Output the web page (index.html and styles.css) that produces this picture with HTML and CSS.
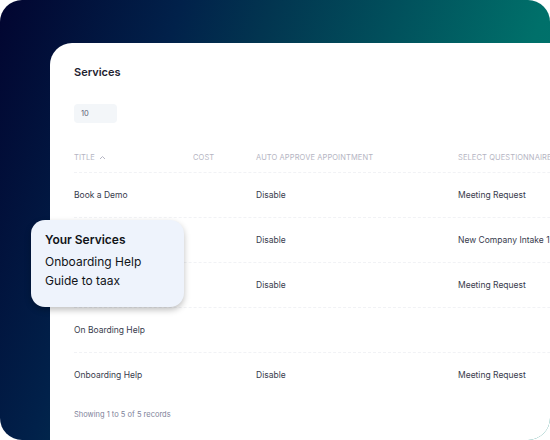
FILE: index.html
```html
<!DOCTYPE html>
<html lang="en">
<head>
    <meta charset="UTF-8">
    <meta name="viewport" content="width=device-width, initial-scale=1.0">
    <title>Services</title>
    <link rel="stylesheet" href="styles.css">
</head>
<body>

    <div class="frame">
        <div class="panel">
            <h1 class="panel-title">Services</h1>
            <div class="page-size">10</div>

            <div class="table">
                <div class="row head">
                    <div class="cell">Title
                        <svg class="sort" width="7" height="5" viewBox="0 0 7 5"><path d="M1 4 L3.5 1.5 L6 4" fill="none" stroke="currentColor" stroke-width="1"/></svg>
                    </div>
                    <div class="cell">Cost</div>
                    <div class="cell">Auto Approve Appointment</div>
                    <div class="cell">Select Questionnaire</div>
                </div>
                <div class="row">
                    <div class="cell">Book a Demo</div>
                    <div class="cell"></div>
                    <div class="cell">Disable</div>
                    <div class="cell">Meeting Request</div>
                </div>
                <div class="row">
                    <div class="cell"></div>
                    <div class="cell"></div>
                    <div class="cell">Disable</div>
                    <div class="cell">New Company Intake 1</div>
                </div>
                <div class="row">
                    <div class="cell"></div>
                    <div class="cell"></div>
                    <div class="cell">Disable</div>
                    <div class="cell">Meeting Request</div>
                </div>
                <div class="row">
                    <div class="cell">On Boarding Help</div>
                    <div class="cell"></div>
                    <div class="cell"></div>
                    <div class="cell"></div>
                </div>
                <div class="row last">
                    <div class="cell">Onboarding Help</div>
                    <div class="cell"></div>
                    <div class="cell">Disable</div>
                    <div class="cell">Meeting Request</div>
                </div>
            </div>

            <p class="records">Showing 1 to 5 of 5 records</p>
        </div>

        <!-- floating services menu over the table -->
        <div class="popover">
            <h2>Your Services</h2>
            <p>Onboarding Help</p>
            <p>Guide to taax</p>
        </div>
    </div>

</body>
</html>
```

FILE: styles.css
```css
* { margin: 0; padding: 0; box-sizing: border-box; }
body {
    width: 550px;
    height: 440px;
    overflow: hidden;
    font-family: 'Inter', 'Noto Sans', sans-serif;
    background: #fff;
}
.frame {
    position: relative;
    width: 550px;
    height: 440px;
    border-radius: 22px;
    overflow: hidden;
    padding: 43px 0 0 50px;
    background: linear-gradient(109deg, #020530 0%, #01214a 26%, #023550 39%, #01505c 57%, #00706a 78%, #00786f 100%);
}
.panel {
    width: 620px;
    height: 420px;
    background: #fff;
    border-top-left-radius: 22px;
    padding: 22px 0 0 24px;
}
.panel-title {
    font-size: 11px;
    line-height: 14px;
    font-weight: 600;
    color: #1e2230;
}
.page-size {
    margin-top: 25px;
    width: 43px;
    height: 19px;
    border-radius: 4px;
    background: #f3f6f9;
    font-size: 7.5px;
    line-height: 19px;
    padding-left: 7px;
    color: #5e6278;
}
.table { margin-top: 20px; }
.row {
    display: grid;
    grid-template-columns: 119px 63px 202px 1fr;
    height: 45px;
    align-items: center;
    border-bottom: 1px dashed #f1f2f5;
    font-size: 8.5px;
    color: #383b4d;
}
.row.head {
    height: 30px;
    font-size: 7.5px;
    text-transform: uppercase;
    color: #b5b5c3;
    letter-spacing: 0.1px;
}
.row.last { height: 44px; border-bottom: none; }
.cell { white-space: nowrap; }
.sort { margin-left: 2px; vertical-align: 0; }
.records {
    margin-top: 12px;
    font-size: 7.5px;
    line-height: 12px;
    color: #7e8299;
}
.popover {
    position: absolute;
    left: 31px;
    top: 220px;
    width: 153px;
    height: 87px;
    padding: 12px 14px;
    border-radius: 14px;
    background: #eef3fc;
    box-shadow: 0 3px 6px rgba(0, 0, 0, 0.25);
    color: #111318;
}
.popover h2 {
    font-size: 12px;
    line-height: 16px;
    font-weight: 600;
    margin-bottom: 4px;
}
.popover p {
    font-size: 12px;
    line-height: 19px;
}
```
